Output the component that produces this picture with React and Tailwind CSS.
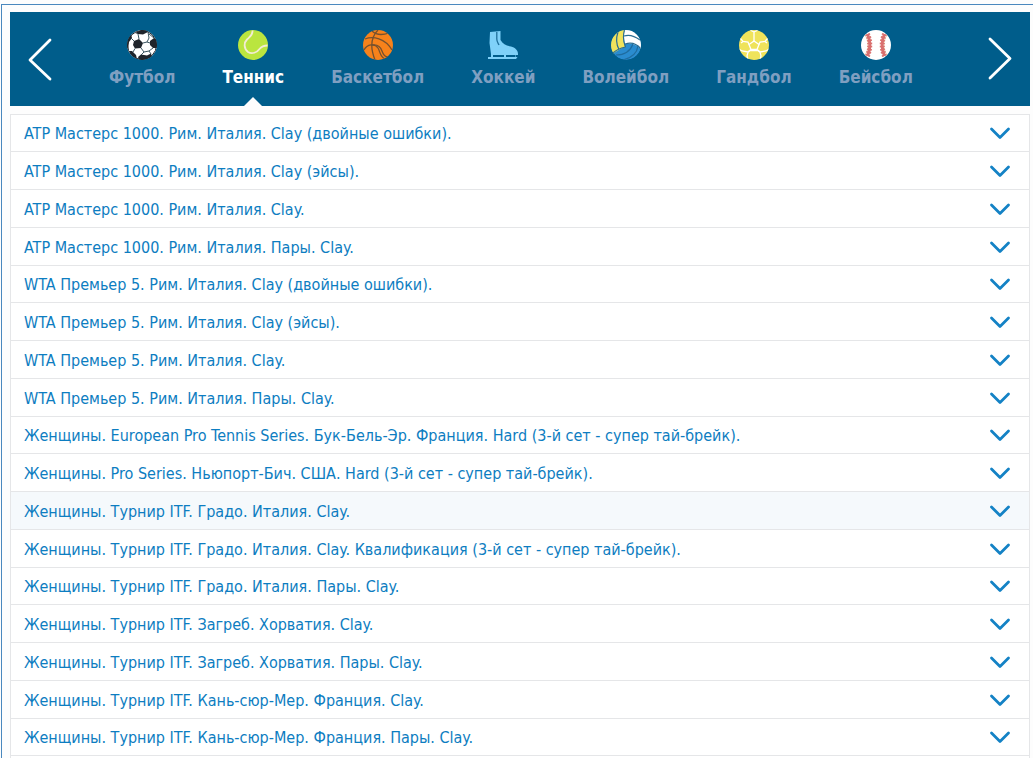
import React, { useState } from 'react'

const Football = () => (
  <svg viewBox="0 0 30 30" className="w-[30px] h-[30px]" aria-hidden="true">
    <clipPath id="football"><circle cx="15" cy="15" r="15"/></clipPath>
    <g clipPath="url(#football)">
      <circle cx="15" cy="15" r="15" fill="#fff"/>
      <g fill="#1f242b">
        <path d="M7 11L12 9L16 13L14 18L8 18.5L6 15Z"/>
        <path d="M8 3L14 0H19L21 2L16 4.5L11 4Z"/>
        <path d="M23 11L27 8L30 10V18L26 18L23 15Z"/>
        <path d="M11 27L14 24.5L20 25.5L24 23.5L25 27L18 30H12Z"/>
        <path d="M0 9L4 4L5 8L2 12L1 19L0 18Z"/>
        <path d="M2 21L5 21L9 25L10 29L5 26Z"/>
      </g>
      <g fill="none" stroke="#3b5560" strokeWidth="1">
        <path d="M12 9L11 4M16 13L20 12L23 13M20 12L22 8L21 2M14 18L17 22L14 25M17 22L22 21L26 18M22 21L24 24M8 18.5L6 22M7 11L4 8M22 4L27 8"/>
        <circle cx="15" cy="15" r="14.500" stroke="#1f242b"/>
      </g>
    </g>
  </svg>
)

const TennisBall = () => (
  <svg viewBox="0 0 30 30" className="w-[30px] h-[30px]" aria-hidden="true">
    <circle cx="15" cy="15" r="15" fill="#bae53f"/>
    <path d="M14.5 0.5C15 5 12 6.500 9 9.500C5.500 13 6 19 10 22C14 24.500 19 22.500 21.500 19C23.500 16.500 26 15.500 29.500 15.500" fill="none" stroke="#f3ecd4" strokeWidth="1.8"/>
  </svg>
)

const Basketball = () => (
  <svg viewBox="0 0 30 30" className="w-[30px] h-[30px]" aria-hidden="true">
    <clipPath id="basketball"><circle cx="15" cy="15" r="15"/></clipPath>
    <circle cx="15" cy="15" r="15" fill="#f7821b"/>
    <g clipPath="url(#basketball)" fill="none" stroke="#75512f" strokeWidth="1.3">
      <path d="M15 0C9 6 6 15 12 30"/>
      <path d="M2 9C10 6 22 8 29 20"/>
      <path d="M9 1C13 5 20 5 26 3"/>
      <path d="M1 20C4 14 12 13 15 18C17 21 17 27 22 29"/>
      <path d="M9 15C15 14 18 18 19 21C20 24 22 27 25 27"/>
    </g>
  </svg>
)

const Skate = () => (
  <svg viewBox="0 0 30 30" className="w-[30px] h-[30px]" aria-hidden="true">
    <path d="M2 2L12.500 1V10C15 14 18 15.500 23 16.500C27 17.500 30 20 30 24V25H27.500V27H29.500L28 29H0V27H3V24L1.500 13Z" fill="#7fd1f9"/>
    <path d="M8.800 2V9C8.800 12 10 13 11 15" fill="none" stroke="#1f6f9b" strokeWidth="1.3"/>
    <path d="M5 26H16M18 26H27" stroke="#005d8b" strokeWidth="1.8"/>
  </svg>
)

const Volleyball = () => (
  <svg viewBox="0 0 30 30" className="w-[30px] h-[30px]" aria-hidden="true">
    <clipPath id="volleyball"><circle cx="15" cy="15" r="15"/></clipPath>
    <g clipPath="url(#volleyball)">
      <circle cx="15" cy="15" r="15" fill="#2a8ccf"/>
      <path d="M14 0C11 6 13 13 14 17C9 19 5 21 2 24H0V0Z" fill="#f0e35c"/>
      <path d="M13.500 0H30V19C25 14 20 13 14 14C12.500 9 12.500 4 13.500 0Z" fill="#fff"/>
      <g fill="none" stroke="#2b6d91" strokeWidth="1.2">
        <path d="M13.500 0C12 5 12.500 12 14.500 17"/>
        <path d="M7 2C5 8 5 14 8 19.500"/>
        <path d="M2 23C6 19 10 18 14.500 17"/>
        <path d="M14 14C20 12 26 14 30 19"/>
        <path d="M13 6C19 4 25 7 29 10"/>
      </g>
      <g fill="none" stroke="#1f6c9f" strokeWidth="1.2">
        <path d="M5 25C12 25 19 22 22 14"/>
        <path d="M12 30C20 28 26 23 27 16"/>
      </g>
    </g>
  </svg>
)

const Handball = () => (
  <svg viewBox="0 0 30 30" className="w-[30px] h-[30px]" aria-hidden="true">
    <clipPath id="handball"><circle cx="15" cy="15" r="15"/></clipPath>
    <circle cx="15" cy="15" r="15" fill="#efe35b"/>
    <g clipPath="url(#handball)" fill="none" stroke="#fff" strokeWidth="1.3">
      <path d="M15 11L20 14.500L18 19.500H12L10 14.500Z"/>
      <path d="M15 11V2M15 2L11 0M15 2L19 0"/>
      <path d="M10 14.500L9 12L4 11.500L1 8M20 14.500L21 12L26 11.500L29 8"/>
      <path d="M12 19.500L9 22L3 21L0 19M9 22L8 26L9 30"/>
      <path d="M18 19.500L21 22L27 21L30 19M21 22L22 26L21 30"/>
      <path d="M9 22L11 20.500H19L21 22"/>
      <path d="M4 11.500L2 13M26 11.500L28 13"/>
    </g>
  </svg>
)

const Baseball = () => (
  <svg viewBox="0 0 30 30" className="w-[30px] h-[30px]" aria-hidden="true">
    <circle cx="15" cy="15" r="15" fill="#fff"/>
    <g fill="none" stroke="#efd9b4" strokeWidth="1">
      <path d="M4 5C8 11 8 19 4 25"/>
      <path d="M26 5C22 11 22 19 26 25"/>
    </g>
    <g fill="none" stroke="#d9706f">
      <g strokeWidth="3">
        <path d="M6.500 4C9.500 11 9.500 19 6.500 26"/>
        <path d="M23.500 4C20.500 11 20.500 19 23.500 26"/>
      </g>
      <g strokeWidth="5" strokeDasharray="1.500 1.500">
        <path d="M6.500 4C9.500 11 9.500 19 6.500 26"/>
        <path d="M23.500 4C20.500 11 20.500 19 23.500 26"/>
      </g>
    </g>
  </svg>
)

const sports = [
  { id: 'football', label: 'Футбол', icon: Football },
  { id: 'tennis', label: 'Теннис', icon: TennisBall },
  { id: 'basketball', label: 'Баскетбол', icon: Basketball },
  { id: 'hockey', label: 'Хоккей', icon: Skate },
  { id: 'volleyball', label: 'Волейбол', icon: Volleyball },
  { id: 'handball', label: 'Гандбол', icon: Handball },
  { id: 'baseball', label: 'Бейсбол', icon: Baseball },
]

const tournaments = [
  'ATP Мастерс 1000. Рим. Италия. Clay (двойные ошибки).',
  'ATP Мастерс 1000. Рим. Италия. Clay (эйсы).',
  'ATP Мастерс 1000. Рим. Италия. Clay.',
  'ATP Мастерс 1000. Рим. Италия. Пары. Clay.',
  'WTA Премьер 5. Рим. Италия. Clay (двойные ошибки).',
  'WTA Премьер 5. Рим. Италия. Clay (эйсы).',
  'WTA Премьер 5. Рим. Италия. Clay.',
  'WTA Премьер 5. Рим. Италия. Пары. Clay.',
  'Женщины. European Pro Tennis Series. Бук-Бель-Эр. Франция. Hard (3-й сет - супер тай-брейк).',
  'Женщины. Pro Series. Ньюпорт-Бич. США. Hard (3-й сет - супер тай-брейк).',
  'Женщины. Турнир ITF. Градо. Италия. Clay.',
  'Женщины. Турнир ITF. Градо. Италия. Clay. Квалификация (3-й сет - супер тай-брейк).',
  'Женщины. Турнир ITF. Градо. Италия. Пары. Clay.',
  'Женщины. Турнир ITF. Загреб. Хорватия. Clay.',
  'Женщины. Турнир ITF. Загреб. Хорватия. Пары. Clay.',
  'Женщины. Турнир ITF. Кань-сюр-Мер. Франция. Clay.',
  'Женщины. Турнир ITF. Кань-сюр-Мер. Франция. Пары. Clay.',
]

export default function App() {
  const [sport, setSport] = useState('tennis')
  const [current, setCurrent] = useState(10)

  return (
    <div className="flex flex-col min-h-screen bg-[#fdfdfd] pt-1 pl-px font-['DejaVu_Sans_Condensed','DejaVu_Sans',sans-serif]">
      <div className="flex flex-1 flex-col border-t border-l border-[#4a88be] pt-[7px] pl-2 pr-[3px]">
        {/* Sports carousel */}
        <nav className="flex items-stretch bg-[#005d8b] h-[94px]">
          <button aria-label="Назад" className="flex items-center pl-[18px] pr-2">
            <svg viewBox="0 0 24 44" className="w-6 h-11" fill="none" stroke="#fff" strokeWidth="2.800" strokeLinecap="round" strokeLinejoin="round">
              <path d="M22 3L2 23L22 42"/>
            </svg>
          </button>
          <div className="flex flex-1 gap-[47px] pl-[49px]">
            {sports.map(({ id, label, icon: Icon }) => (
              <button key={id} onClick={() => setSport(id)}
                className={`relative flex flex-col items-center pt-[18px] text-[17px] leading-6 font-bold ${sport === id ? 'text-white' : 'text-[#7f9fc1]'}`}>
                <Icon/>
                <span className="mt-[5px]">{label}</span>
                {sport === id && (
                  <svg viewBox="0 0 18 9" className="absolute bottom-0 left-1/2 -translate-x-1/2 w-[18px] h-[9px]" aria-hidden="true">
                    <path d="M0 9L9 0L18 9Z" fill="#fdfdfd"/>
                  </svg>
                )}
              </button>
            ))}
          </div>
          <button aria-label="Вперёд" className="flex items-center pl-2 pr-[18px]">
            <svg viewBox="0 0 24 44" className="w-6 h-11" fill="none" stroke="#fff" strokeWidth="2.800" strokeLinecap="round" strokeLinejoin="round">
              <path d="M2 2L22 21.500L2 41"/>
            </svg>
          </button>
        </nav>

        {/* Tournaments */}
        <ul className="flex-1 mt-2 bg-white border-t border-x border-[#e5e6e8]">
          {tournaments.map((name, i) => (
            <li key={name} className="h-[38px] [&:nth-child(4n+1)]:h-[37px] border-b border-[#e5e6e8]">
              <button onClick={() => setCurrent(i)}
                className={`flex h-full w-full items-center justify-between pl-[13px] pr-[18px] text-left text-base text-[#0d7dc1] ${current === i ? 'bg-[#f5f9fc]' : ''}`}>
                <span className="pt-0.5">{name}</span>
                <svg viewBox="0 0 22 14" className="w-[22px] h-[14px]" fill="none" stroke="#1482c5" strokeWidth="2.800" strokeLinecap="round" strokeLinejoin="round" aria-hidden="true">
                  <path d="M2.500 3L11 11.500L19.500 3"/>
                </svg>
              </button>
            </li>
          ))}
        </ul>
      </div>
    </div>
  )
}
